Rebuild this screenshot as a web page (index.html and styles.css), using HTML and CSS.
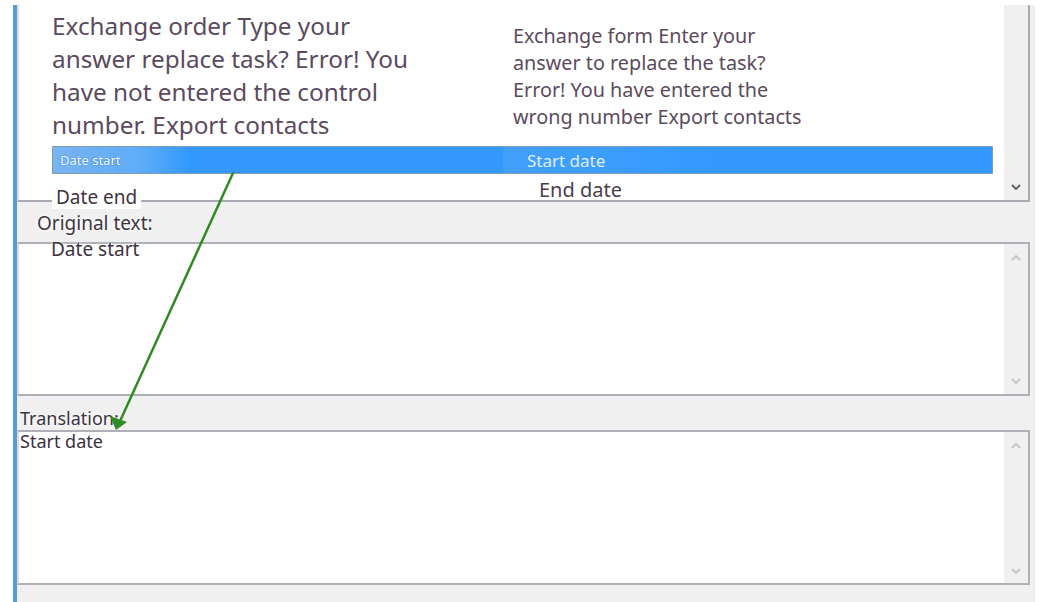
FILE: index.html
```html
<!DOCTYPE html>
<html>
<head>
<meta charset="utf-8">
<title>Translation</title>
<link rel="stylesheet" href="styles.css">
</head>
<body>
<div class="panel">
  <div class="listbox">
    <div class="list-content">
      <div class="row-top">
        <div class="big">Exchange order Type your<br>answer replace task? Error! You<br>have not entered the control<br>number. Export contacts</div>
        <div class="mid">Exchange form Enter your<br>answer to replace the task?<br>Error! You have entered the<br>wrong number Export contacts</div>
      </div>
      <div class="row-sel">
        <div class="sel-left">Date start</div>
        <div class="sel-right">Start date</div>
      </div>
      <div class="row-next">
        <div class="date-end">Date end</div>
        <div class="end-date">End date</div>
      </div>
    </div>
    <div class="vscroll vscroll-list">
      <svg class="chev" width="10" height="6" viewBox="0 0 10 6"><polyline points="1,1 5,5 9,1" fill="none" stroke="#5a5a5a" stroke-width="1.8"/></svg>
    </div>
  </div>

  <div class="label-orig">Original text:</div>

  <div class="textbox tb-orig">
    <div class="tb-content">
      <div class="tb-text-orig">Date start</div>
    </div>
    <div class="vscroll vscroll-box">
      <svg class="chev" width="10" height="6" viewBox="0 0 10 6"><polyline points="1,5 5,1 9,5" fill="none" stroke="#c4c4c4" stroke-width="1.8"/></svg>
      <svg class="chev" width="10" height="6" viewBox="0 0 10 6"><polyline points="1,1 5,5 9,1" fill="none" stroke="#c4c4c4" stroke-width="1.8"/></svg>
    </div>
  </div>

  <div class="label-trans">Translation:</div>

  <div class="textbox tb-trans">
    <div class="tb-content">
      <div class="tb-text-trans">Start date</div>
    </div>
    <div class="vscroll vscroll-box2">
      <svg class="chev" width="10" height="6" viewBox="0 0 10 6"><polyline points="1,5 5,1 9,5" fill="none" stroke="#c4c4c4" stroke-width="1.8"/></svg>
      <svg class="chev" width="10" height="6" viewBox="0 0 10 6"><polyline points="1,1 5,5 9,1" fill="none" stroke="#c4c4c4" stroke-width="1.8"/></svg>
    </div>
  </div>
</div>

<svg class="arrow" width="1050" height="602" viewBox="0 0 1050 602">
  <line x1="233" y1="173" x2="121" y2="419" stroke="#2f8c21" stroke-width="2.5" stroke-linecap="round"/>
  <polygon points="116,430 110,416 127,422" fill="#2f8c21"/>
</svg>
</body>
</html>
```

FILE: styles.css
```css
* {
  box-sizing: border-box;
}

html, body {
  margin: 0;
  padding: 0;
  background: #ffffff;
}

body {
  position: relative;
  width: 1050px;
  height: 602px;
  overflow: hidden;
  font-family: "Noto Sans", "Open Sans", sans-serif;
  color: #5a4a5d;
}

.panel {
  margin: 5px 0 0 13px;
  width: 1022px;
  height: 597px;
  background: #f0f0f0;
  border-left: 4px solid #5b9ad3;
}

.listbox {
  display: flex;
  width: 1013px;
  height: 197px;
  border-left: 2px solid #dcdcdc;
  border-right: 2px solid #a9a9b1;
  border-bottom: 2px solid #a9a9b1;
}

.list-content {
  flex: 1;
  background: #ffffff;
}

.row-top {
  height: 141px;
  padding: 4px 0 0 33px;
  display: grid;
  grid-template-columns: 461px auto;
  align-items: start;
}

.big {
  font-size: 24.3px;
  line-height: 33px;
  color: #5b4a60;
}

.mid {
  font-size: 19.8px;
  line-height: 27px;
  padding-top: 13px;
  color: #5b4a5d;
}

.row-sel {
  margin: 0 11px 0 33px;
  height: 28px;
  background: #3399ff;
  border: 1px dotted #d0a060;
  display: grid;
  grid-template-columns: 450px 212px;
  grid-template-rows: 26px;
}

.sel-left {
  width: 137px;
  height: 26px;
  padding-left: 7px;
  font-size: 13px;
  line-height: 26px;
  color: #ffffff;
  background: linear-gradient(to right, #79b4ef, #5eacf8 65%, #3399ff);
  text-shadow: 0 0 1px #2f7fe0, 0 0 1px #2f7fe0;
}

.sel-right {
  height: 26px;
  padding: 2px 0 0 24px;
  font-size: 17px;
  line-height: 24px;
  color: #e2edff;
  background: linear-gradient(to right, #42a0fc, #3a9dfd 60%, #3399ff);
}

.row-next {
  height: 26px;
  padding-left: 33px;
  display: grid;
  grid-template-columns: 487px auto;
  align-items: start;
}

.date-end {
  justify-self: start;
  margin-top: 11px;
  padding: 0 4px;
  font-size: 19px;
  line-height: 24px;
  color: #3e3442;
  background: #ffffff;
}

.end-date {
  margin-top: 4px;
  font-size: 20px;
  line-height: 24px;
  color: #4a3e4d;
}

.vscroll {
  width: 24px;
  background: #f0f0f0;
  display: flex;
  flex-direction: column;
  align-items: center;
}

.vscroll-list {
  justify-content: flex-end;
  padding-bottom: 10px;
}

.vscroll-box {
  justify-content: space-between;
  padding: 11px 0 10px;
}

.vscroll-box2 {
  justify-content: space-between;
  padding: 11px 0 9px;
}

.chev {
  display: block;
}

.label-orig {
  height: 40px;
  padding: 9px 0 0 20px;
  font-size: 19px;
  line-height: 24px;
  color: #3d3441;
  text-shadow: 0 0 2px #fff, 0 0 4px #fff, 0 0 6px #fff;
}

.textbox {
  display: flex;
  width: 1013px;
  border: 2px solid #afafb7;
  border-left-color: #dcdcdc;
}

.tb-orig {
  height: 154px;
}

.tb-trans {
  height: 155px;
}

.tb-content {
  flex: 1;
  background: #ffffff;
}

.tb-text-orig {
  margin-top: -7px;
  padding-left: 32px;
  font-size: 19px;
  line-height: 24px;
  color: #3d3441;
  text-shadow: 0 0 2px #fff, 0 0 4px #fff;
}

.label-trans {
  height: 34px;
  padding: 11px 0 0 3px;
  font-size: 18px;
  line-height: 22px;
  color: #3a3240;
  text-shadow: 0 0 2px #fff, 0 0 4px #fff;
}

.tb-text-trans {
  margin-top: -2px;
  padding-left: 1px;
  font-size: 18px;
  line-height: 22px;
  color: #3a3240;
}

.arrow {
  position: absolute;
  left: 0;
  top: 0;
  pointer-events: none;
}
```
